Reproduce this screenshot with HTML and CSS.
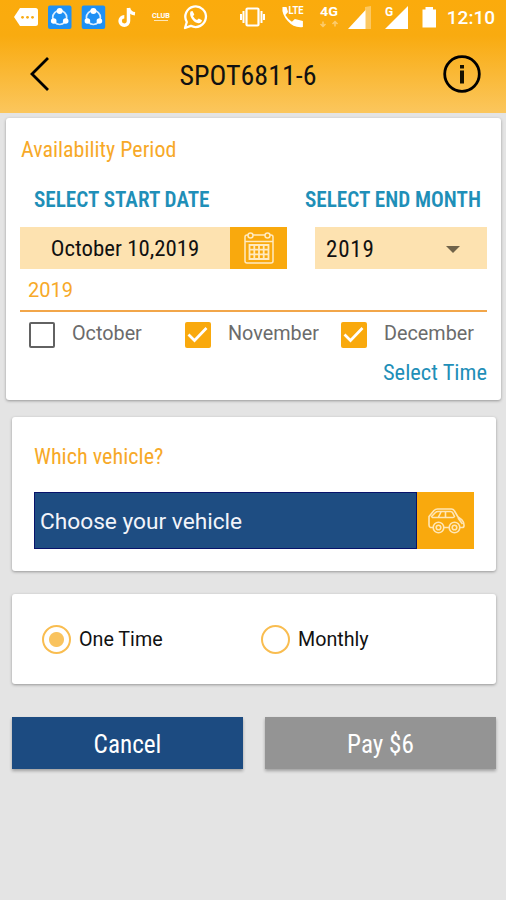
FILE: index.html
```
<!DOCTYPE html>
<html lang="en">
<head>
<meta charset="utf-8">
<title>Spot booking</title>
<link rel="stylesheet" href="styles.css">
</head>
<body>
<header class="top">
  <div class="status">
    <svg class="status-icons" width="506" height="34" viewBox="0 0 506 34">
      <path d="M20 8h15.500q2.500 0 2.500 2.500v13q0 2.500-2.500 2.500H20l-6-9z" fill="#fff"/>
      <g fill="#f9ab14"><circle cx="22.500" cy="17.300" r="1.400"/><circle cx="27.500" cy="17.300" r="1.400"/><circle cx="32.500" cy="17.300" r="1.400"/></g>
      <g id="share">
        <rect x="48" y="5.500" width="23.500" height="23.500" rx="2" fill="#1e90f5"/>
        <circle cx="59.700" cy="17.500" r="7" fill="none" stroke="#d8ecff" stroke-width="1.700"/>
        <g fill="#fff"><circle cx="59.700" cy="11" r="3"/><circle cx="53.700" cy="21" r="2.800"/><circle cx="65.700" cy="21" r="2.800"/></g>
      </g>
      <use href="#share" x="33.700"/>
      <path d="M128.500 8v13a4.200 4.200 0 1 1-4.200-4.200M128.500 8q1 5.300 6.500 5.800" fill="none" stroke="#fff" stroke-width="3.500"/>
      <path d="M154 20.500h14" stroke="#fff" stroke-opacity=".7"/>
      <path d="M185 28l1.800-6a10.300 10.300 0 1 1 4 3.800z" fill="none" stroke="#fff" stroke-width="2.300" stroke-linejoin="round"/>
      <path d="M190.500 11.500l2-.5 1.800 3.500-1.300 1.800q1.500 2.700 4 3.700l1.800-1.500 3.200 1.800q-.5 3-3.500 3-4-.3-6.700-4.500-2.600-4-1.300-7.300z" fill="#fff"/>
      <rect x="246.500" y="8.500" width="12" height="17" rx="1" fill="none" stroke="#fff" stroke-width="2.200"/>
      <path d="M243.500 11v12M261.500 11v12M241 14v6M264 14v6" stroke="#fff" stroke-width="2"/>
      <path d="M282.500 7h4l1.500 5-2.600 3q2.600 4.500 6.500 6.700l3-2.700 8 2v6q-9 1.200-15.200-6Q281.500 14 282.500 7z" fill="#fff"/>
      <path d="M323 21.500v5m-2.500-2.500l2.500 2.500 2.500-2.500M335 26.500v-5m-2.500 2.500l2.500-2.500 2.500 2.500" fill="none" stroke="#fff" stroke-opacity=".4" stroke-width="1.500"/>
      <path d="M365 7l6-1v23h-6z" fill="#fff" opacity=".35"/>
      <path d="M348 29L365.500 10v19zM385 29L408 6v23z" fill="#fff"/>
      <path d="M422.500 9.500h3V7h7.500v2.500h3v18h-13.500z" fill="#fff"/>
      <g class="tiny"><text x="152" y="18" font-size="6.500" textLength="18" lengthAdjust="spacingAndGlyphs">CLUB</text><text x="288.500" y="14" font-size="10" textLength="15" lengthAdjust="spacingAndGlyphs">LTE</text><text x="320" y="16" font-size="13" textLength="18" lengthAdjust="spacingAndGlyphs">4G</text><text x="385" y="15.500" font-size="12">G</text></g>
    </svg>
    <span class="clock">12:10</span>
  </div>
  <div class="bar">
    <svg class="back" width="24" height="38" viewBox="0 0 24 38"><path d="M20 3L4 19 20 35" fill="none" stroke="#000" stroke-width="2.800"/></svg>
    <h1>SPOT6811-6</h1>
    <svg width="40" height="40" viewBox="0 0 40 40"><circle cx="20" cy="20" r="17.300" fill="none" stroke="#000" stroke-width="2.800"/><path d="M20 11v3.600M20 16.500v13" stroke="#161200" stroke-width="4"/></svg>
  </div>
</header>

<main>
  <section class="card period">
    <h2>Availability Period</h2>
    <div class="labels"><span>SELECT START DATE</span><span>SELECT END MONTH</span></div>
    <div class="fields">
      <div class="date"><span>October 10,2019</span>
        <div class="cal"><svg width="34" height="36" viewBox="0 0 34 36" fill="none" stroke="#ffeac0" stroke-width="1.500"><rect x="3" y="5" width="28" height="28" rx="2"/><path d="M3 11.500h28"/><path d="M7.500 15h19v14h-19zM12.300 15v14M17 15v14M21.700 15v14M7.500 19.700h19M7.500 24.300h19" stroke-width="1.800"/><g fill="#f9a90d"><circle cx="8.500" cy="5.500" r="2.500"/><circle cx="25.500" cy="5.500" r="2.500"/></g></svg></div>
      </div>
      <div class="year"><span>2019</span><i class="caret"></i></div>
    </div>
    <div class="year-head">2019</div>
    <div class="months">
      <label><i class="box"></i>October</label>
      <label><i class="box on"><svg width="25" height="25" viewBox="0 0 25 25"><path d="M3.500 12.500l6 6L21.500 6" fill="none" stroke="#fff" stroke-width="2.700"/></svg></i>November</label>
      <label><i class="box on"><svg width="25" height="25" viewBox="0 0 25 25"><path d="M3.500 12.500l6 6L21.500 6" fill="none" stroke="#fff" stroke-width="2.700"/></svg></i>December</label>
    </div>
    <a class="time">Select Time</a>
  </section>

  <section class="card vehicle">
    <h2>Which vehicle?</h2>
    <div class="choose"><span>Choose your vehicle</span>
      <div class="car"><svg width="38" height="28" viewBox="0 0 38 28" fill="none" stroke="#ffe6b5" stroke-width="1.600" stroke-linejoin="round"><path d="M6 20.500H3.500q-1.500-.5-1.500-2.500v-8.500l5-6Q8.500 2 10.500 2h14q2 0 3 2l3.500 6 4 3q2 2 2 5v1q0 1.500-2 1.500h-2M17 20.500h5"/><path d="M4.500 9.500l4-4q1-1 2.500-1h12.500q1.500 0 2.300 1.500l1.700 3.500q-.5 1-1.500 1H5.500zM14 5l-2.500 5M18.500 5v5M31 11l4.500 6"/><circle cx="11.500" cy="20.500" r="5.300"/><circle cx="11.500" cy="20.500" r="2.300"/><circle cx="27.500" cy="20.500" r="5.300"/><circle cx="27.500" cy="20.500" r="2.300"/></svg></div>
    </div>
  </section>

  <section class="card plan">
    <label><i class="radio on"></i>One Time</label>
    <label><i class="radio"></i>Monthly</label>
  </section>

  <div class="actions"><button class="cancel">Cancel</button><button class="pay">Pay $6</button></div>
</main>
</body>
</html>
```
FILE: styles.css
```
* { box-sizing: border-box; }
body { margin: 0; min-height: 900px; background: #e4e4e4; font-family: Roboto, sans-serif; color: #111; }
h1, h2 { margin: 0; font-weight: 400; font-stretch: condensed; }
i { display: block; flex: none; }
svg { display: block; flex: none; }

.top { height: 113px; background: linear-gradient(#fbab0c 0, #f9ab10 36px, #fbc65c 112px); }
.status { position: relative; height: 34px; }
.status-icons { display: block; }
.tiny { fill: #fff; font-family: Roboto, sans-serif; font-weight: 700; }
.clock { position: absolute; right: 11px; top: 6px; color: #fff; font-size: 19px; font-weight: 500; line-height: 24px; }
.bar { display: flex; align-items: center; justify-content: space-between; height: 80px; padding: 0 24px 0 28px; }
.bar h1 { font-size: 28px; line-height: 34px; margin: 4px 0 0 2px; }

.card { background: #fff; border-radius: 3px; box-shadow: 0 1px 3px rgba(0, 0, 0, .35); }
.card h2 { color: #f7a928; }
.period { margin: 5px 5px 0 6px; height: 282px; padding: 18px 14px 0; }
.period h2 { font-size: 22px; line-height: 28px; padding-left: 1px; }
.labels { display: flex; justify-content: space-between; padding: 0 6px 0 14px; margin-top: 22px; color: #1f8fb8; font-size: 21.200px; line-height: 28px; font-weight: 600; font-stretch: condensed; }
.fields { display: flex; justify-content: space-between; height: 42px; margin-top: 13px; font-size: 23px; font-stretch: condensed; }
.date { display: flex; width: 267px; background: #fde2b0; }
.date span { flex: 1; text-align: center; font-size: 22.800px; line-height: 44px; }
.cal { width: 57px; background: #f9a90d; display: flex; align-items: center; justify-content: center; }
.year { display: flex; justify-content: space-between; align-items: center; width: 172px; padding: 2px 27px 0 11px; background: #fde2b0; letter-spacing: .8px; }
.caret { border: 7px solid transparent; border-top-color: #706349; border-bottom: 0; }
.year-head { height: 43px; padding: 8px 0 0 8px; border-bottom: 2px solid #f2a64a; color: #f7a928; font-size: 20px; line-height: 27px; }
.months { display: grid; grid-template-columns: 156px 156px 1fr; padding: 9px 0 0 9px; color: #6b6b6b; font-size: 19.800px; line-height: 25px; }
.months label { display: flex; gap: 17px; }
.box { width: 26px; height: 26px; border: 2px solid #626262; border-radius: 2px; margin-top: 1px; }
.box.on { border: 0; background: #f9a90d; }
.time { display: block; margin-top: 10px; text-align: right; color: #1f8fb8; font-size: 22.500px; line-height: 28px; font-stretch: condensed; }

.vehicle { margin: 17px 10px 0 12px; height: 154px; padding: 25px 22px 0; }
.vehicle h2 { font-size: 22.200px; line-height: 28px; }
.choose { display: flex; width: 440px; height: 57px; margin-top: 22px; }
.choose span { flex: 1; padding-left: 5px; border: 1px solid #08136b; background: #1e4d82; color: #f2f4fa; font-size: 22.700px; line-height: 58px; }
.car { width: 57px; display: flex; align-items: center; justify-content: center; background: #f9a90d; }

.plan { display: grid; grid-template-columns: 219px 1fr; align-items: center; margin: 23px 10px 0 12px; height: 90px; padding-left: 30px; font-size: 19.700px; }
.plan label { display: flex; align-items: center; gap: 8px; }
.radio { width: 29px; height: 29px; border: 2.500px solid #f9bd50; border-radius: 50%; }
.radio.on { background: radial-gradient(circle, #f9c35e 7px, transparent 8px); }

.actions { display: grid; grid-template-columns: 1fr 1fr; gap: 22px; margin: 33px 10px 0 12px; }
button { height: 52px; padding: 3px 0 0; border: 0; color: #fff; font: 25.200px Roboto, sans-serif; font-stretch: condensed; box-shadow: 0 2px 3px rgba(0, 0, 0, .3); }
.cancel { background: #1c4b81; }
.pay { background: #949494; }
```
